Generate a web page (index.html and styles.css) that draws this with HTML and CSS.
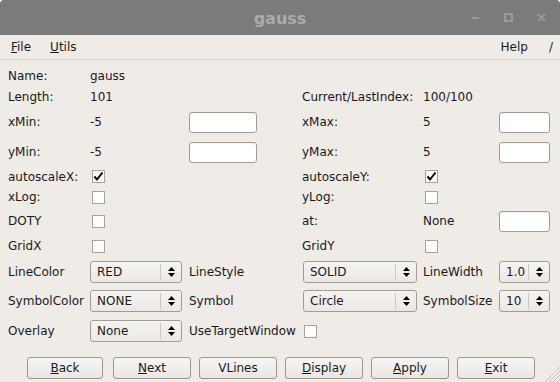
FILE: index.html
```html
<!DOCTYPE html>
<html lang="en">
<head>
    <meta charset="UTF-8">
    <title>gauss</title>
    <link rel="stylesheet" href="styles.css">
</head>
<body>
    <div class="window">
        <div class="titlebar">
            <span></span>
            <span class="title">gauss</span>
            <svg class="controls" width="90" height="35" viewBox="0 0 90 35">
                <line x1="6" y1="18" x2="13" y2="18" stroke="#999" stroke-width="2"/>
                <rect x="39" y="14" width="7" height="7" fill="none" stroke="#9a9a9a" stroke-width="2"/>
                <path d="M72 14 L79 21 M79 14 L72 21" stroke="#999" stroke-width="2.2"/>
            </svg>
        </div>

        <div class="menubar">
            <span class="menu"><u>F</u>ile</span>
            <span class="menu"><u>U</u>tils</span>
            <span class="spacer"></span>
            <span class="menu">Help</span>
            <span class="menu slash">/</span>
        </div>

        <div class="form">
            <span class="c1">Name:</span>
            <span class="c2">gauss</span>

            <span class="c1">Length:</span>
            <span class="c2">101</span>
            <span class="c4">Current/LastIndex:</span>
            <span class="c5">100/100</span>

            <span class="c1">xMin:</span>
            <span class="c2">-5</span>
            <div class="c3 entry"></div>
            <span class="c4">xMax:</span>
            <span class="c5">5</span>
            <div class="c6 entry small"></div>

            <span class="c1">yMin:</span>
            <span class="c2">-5</span>
            <div class="c3 entry"></div>
            <span class="c4">yMax:</span>
            <span class="c5">5</span>
            <div class="c6 entry small"></div>

            <span class="c1">autoscaleX:</span>
            <div class="c2 check"><svg width="11" height="11" viewBox="0 0 11 11"><polyline points="1.5,5.5 4,8.5 9.5,1.5" fill="none" stroke="#000" stroke-width="2"/></svg></div>
            <span class="c4">autoscaleY:</span>
            <div class="c5 check"><svg width="11" height="11" viewBox="0 0 11 11"><polyline points="1.5,5.5 4,8.5 9.5,1.5" fill="none" stroke="#000" stroke-width="2"/></svg></div>

            <span class="c1">xLog:</span>
            <div class="c2 check"></div>
            <span class="c4">yLog:</span>
            <div class="c5 check"></div>

            <span class="c1">DOTY</span>
            <div class="c2 check"></div>
            <span class="c4">at:</span>
            <span class="c5">None</span>
            <div class="c6 entry small"></div>

            <span class="c1">GridX</span>
            <div class="c2 check"></div>
            <span class="c4">GridY</span>
            <div class="c5 check"></div>

            <span class="c1">LineColor</span>
            <div class="c2 combo"><span class="value">RED</span><span class="arrows"><svg width="9" height="12" viewBox="0 0 9 12"><path d="M4.5 1 L8 5 L1 5 Z M1 7 L8 7 L4.5 11 Z" fill="#000"/></svg></span></div>
            <span class="c3">LineStyle</span>
            <div class="c4 combo wide"><span class="value">SOLID</span><span class="arrows"><svg width="9" height="12" viewBox="0 0 9 12"><path d="M4.5 1 L8 5 L1 5 Z M1 7 L8 7 L4.5 11 Z" fill="#000"/></svg></span></div>
            <span class="c5">LineWidth</span>
            <div class="c6 combo small"><span class="value">1.0</span><span class="arrows"><svg width="9" height="12" viewBox="0 0 9 12"><path d="M4.5 1 L8 5 L1 5 Z M1 7 L8 7 L4.5 11 Z" fill="#000"/></svg></span></div>

            <span class="c1">SymbolColor</span>
            <div class="c2 combo"><span class="value">NONE</span><span class="arrows"><svg width="9" height="12" viewBox="0 0 9 12"><path d="M4.5 1 L8 5 L1 5 Z M1 7 L8 7 L4.5 11 Z" fill="#000"/></svg></span></div>
            <span class="c3">Symbol</span>
            <div class="c4 combo wide"><span class="value">Circle</span><span class="arrows"><svg width="9" height="12" viewBox="0 0 9 12"><path d="M4.5 1 L8 5 L1 5 Z M1 7 L8 7 L4.5 11 Z" fill="#000"/></svg></span></div>
            <span class="c5">SymbolSize</span>
            <div class="c6 combo small"><span class="value">10</span><span class="arrows"><svg width="9" height="12" viewBox="0 0 9 12"><path d="M4.5 1 L8 5 L1 5 Z M1 7 L8 7 L4.5 11 Z" fill="#000"/></svg></span></div>

            <span class="c1">Overlay</span>
            <div class="c2 combo"><span class="value">None</span><span class="arrows"><svg width="9" height="12" viewBox="0 0 9 12"><path d="M4.5 1 L8 5 L1 5 Z M1 7 L8 7 L4.5 11 Z" fill="#000"/></svg></span></div>
            <span class="c3">UseTargetWindow</span>
            <div class="c4 check"></div>
        </div>

        <div class="buttons">
            <button class="btn back"><u>B</u>ack</button>
            <button class="btn"><u>N</u>ext</button>
            <button class="btn">VLines</button>
            <button class="btn"><u>D</u>isplay</button>
            <button class="btn"><u>A</u>pply</button>
            <button class="btn"><u>E</u>xit</button>
        </div>

        <svg class="grip" width="17" height="17" viewBox="0 0 17 17">
            <path d="M2 17 L17 2 M6 17 L17 6 M10 17 L17 10 M14 17 L17 14" stroke="#c4bfb9" stroke-width="1"/>
        </svg>
    </div>
</body>
</html>
```

FILE: styles.css
```css
html {
    background: #ffffff;
}

body {
    margin: 0;
    padding: 0;
    font-family: "DejaVu Sans", sans-serif;
    font-size: 12px;
    color: #1a1a1a;
}

.window {
    position: relative;
    width: 560px;
    height: 382px;
    background-color: #efebe7;
    border-radius: 4px 4px 0 0;
    overflow: hidden;
}

.titlebar {
    display: grid;
    grid-template-columns: 1fr auto 1fr;
    align-items: center;
    height: 35px;
    background-color: #7b7b7b;
}

.title {
    font-size: 16px;
    font-weight: bold;
    color: #ababab;
    padding-top: 1px;
}

.controls {
    justify-self: end;
    margin-right: 4px;
}

.menubar {
    display: flex;
    align-items: center;
    height: 24px;
    border-bottom: 1px solid #d8d4cf;
    padding-left: 11px;
}

.menu {
    margin-right: 19px;
}

.spacer {
    flex: 1;
}

.slash {
    margin-right: 7px;
    margin-left: 2px;
}

.form {
    display: grid;
    grid-template-columns: 82px 99px 113px 121px 76px 52px;
    grid-template-rows: 22px 20px 30px 30px 19px 22px 26px 24px 28px 30px 30px;
    align-items: center;
    margin-top: 5px;
    padding-left: 8px;
}

.c1 { grid-column: 1; }
.c2 { grid-column: 2; }
.c3 { grid-column: 3; }
.c4 { grid-column: 4; }
.c5 { grid-column: 5; }
.c6 { grid-column: 6; }

.entry {
    width: 68px;
    height: 21px;
    box-sizing: border-box;
    background: #fff;
    border: 1px solid #a29c96;
    border-radius: 3px;
    box-shadow: inset 0 1px 1px rgba(0, 0, 0, 0.06);
}

.entry.small {
    width: 51px;
}

.check {
    display: flex;
    align-items: center;
    justify-content: center;
    width: 13px;
    height: 13px;
    box-sizing: border-box;
    margin-left: 2px;
    background: #fff;
    border: 1px solid #a8a29b;
}

.combo {
    display: flex;
    align-items: center;
    width: 92px;
    height: 22px;
    box-sizing: border-box;
    border: 1px solid #a29c96;
    border-radius: 3px;
    background: linear-gradient(#f6f4f2, #ebe8e4);
}

.combo.wide {
    width: 114px;
    margin-left: 1px;
}

.combo.small {
    width: 51px;
}

.combo .value {
    flex: 1;
    padding-left: 6px;
}

.arrows {
    display: flex;
    align-items: center;
    justify-content: center;
    width: 20px;
    height: 16px;
    border-left: 1px solid #cdc8c2;
}

.buttons {
    display: flex;
    gap: 8px;
    margin-top: 11px;
    padding-left: 27px;
}

.btn {
    width: 78px;
    height: 22px;
    padding: 0;
    font-family: "DejaVu Sans", sans-serif;
    font-size: 12px;
    color: #1a1a1a;
    border: 1px solid #9c968f;
    border-radius: 3px;
    background: linear-gradient(#f7f6f4, #e9e6e2);
}

.btn.back {
    width: 76px;
    margin-right: 2px;
}

.grip {
    position: absolute;
    right: 0;
    bottom: 0;
}
```
